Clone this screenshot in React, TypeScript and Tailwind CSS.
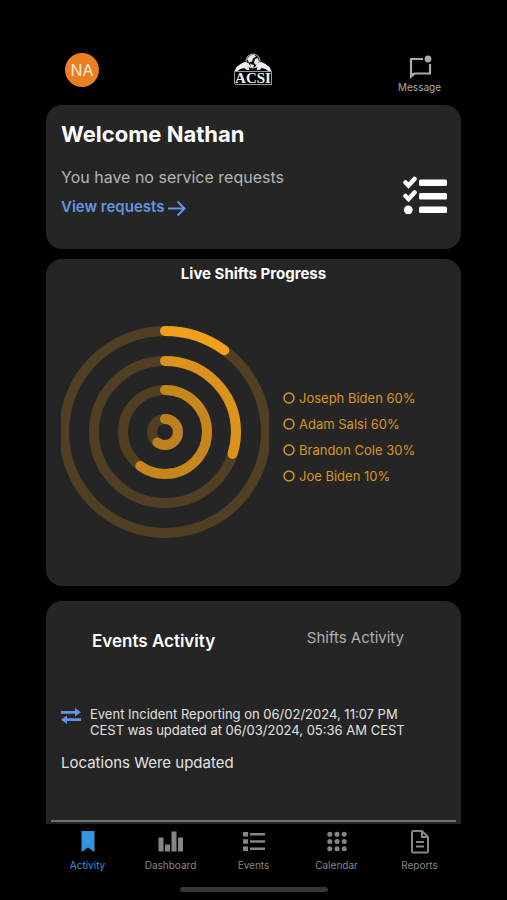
import { useState } from "react";

const shifts = [
  { name: "Joseph Biden", percent: 60, radius: 13, color: "#be811f" },
  { name: "Adam Salsi", percent: 60, radius: 42, color: "#c6861e" },
  { name: "Brandon Cole", percent: 30, radius: 71, color: "#db931d" },
  { name: "Joe Biden", percent: 10, radius: 101, color: "#f2a01b" },
];

function Logo() {
  return (
    <svg className="w-10 h-8" viewBox="0 0 40 32" role="img" aria-label="ACSI">
      {/* Globe */}
      <circle cx="20" cy="8" r="7" fill="#111" stroke="#bbb" strokeWidth="1" />
      <path d="M14 6l3-3.500 4-1 2 2-3 2-1 3-3 1zM22 6l3-1 1 4-3 3-2-2zM17 11l4 1-1 3-2-1z" fill="#e8e8e8" />
      {/* Lions */}
      <path d="M1.500 18l2-4 4-3 4-2 4 1 3 5-3-1 1 3h-3l-2-2-4 1-3 2z" fill="#eee" />
      <path d="M38.500 18l-2-4-4-3-4-2-4 1-3 5 3-1-1 3h3l2-2 4 1 3 2z" fill="#eee" />
      <path d="M1 18.500h38M2 31.500h37M1.500 19v12M38.500 19v12" stroke="#999" strokeWidth="1" />
      <text x="20" y="30" textAnchor="middle" fontFamily="Liberation Serif, serif" fontWeight="bold" fontSize="15" fill="#f3f3f3">
        ACSI
      </text>
    </svg>
  );
}

function TasksIcon() {
  return (
    <svg className="w-11 h-[38px] shrink-0" viewBox="0 0 44 38" fill="#fff" aria-hidden="true">
      <path d="M2.500 6.500L5.500 9.500 11.500 3M2.500 20L5.500 23 11.500 16.500" fill="none" stroke="#fff" strokeWidth="4.500" strokeLinecap="round" strokeLinejoin="miter" />
      <circle cx="5.300" cy="33.800" r="4.400" />
      <rect x="16" y="3.500" width="28" height="6.500" rx="1.500" />
      <rect x="16" y="17" width="28" height="6.500" rx="1.500" />
      <rect x="16" y="30.500" width="28" height="6.500" rx="1.500" />
    </svg>
  );
}

function ShiftRings() {
  return (
    <svg className="w-52 h-[214px] shrink-0" viewBox="-104 -107 208 214" fill="none" role="img" aria-label="Live shifts progress">
      {shifts.map(({ name, percent, radius, color }) => (
        <g key={name} strokeWidth="10">
          <circle r={radius} stroke="#503f23" />
          <circle
            r={radius}
            stroke={color}
            strokeLinecap="round"
            pathLength={100}
            strokeDasharray={`${percent} 100`}
            transform="rotate(-90)"
          />
        </g>
      ))}
    </svg>
  );
}

const navItems = [
  {
    label: "Activity",
    icon: <path d="M7.500 1h13v21L14 17.500 7.500 22z" />,
  },
  {
    label: "Dashboard",
    icon: <path d="M1.500 7.500h5v14h-5zM8 14.500h5v7H8zM14.500 1.500h5v20h-5zM21 7.500h5v14h-5z" />,
  },
  {
    label: "Events",
    icon: <path d="M3 2h5v4.500H3zM3 9.200h5v4.500H3zM3 16.500h5V21H3zM10 3h15v2.400H10zM10 10.300h15v2.400H10zM10 17.600h15V20H10z" />,
  },
  {
    label: "Calendar",
    icon: [4.3, 11.5, 18.7].map((cy) => [6.8, 14, 21.2].map((cx) => <circle key={`${cx}-${cy}`} cx={cx} cy={cy} r="2.500" />)),
  },
  {
    label: "Reports",
    icon: (
      <g fill="none" stroke="currentColor" strokeWidth="2" strokeLinejoin="round">
        <path d="M7.500 1H16l6 6v14q0 1.500-1.500 1.500h-13Q6 22.500 6 21V2.500Q6 1 7.500 1z" />
        <path d="M16 1v6h6M10 12h8M10 16.500h8" />
      </g>
    ),
  },
];

export default function App() {
  const [activeTab, setActiveTab] = useState("Activity");

  return (
    <div className="min-h-screen flex flex-col bg-black px-[46px] font-['Inter',sans-serif] text-white">
      {/* Header */}
      <header className="h-[105px] grid grid-cols-3 items-start pl-[19px] pr-5 pt-[53px]">
        <button type="button" className="w-[34px] h-[34px] rounded-full bg-[#e88022] text-base leading-none text-[#fbe9d8]">
          NA
        </button>
        <div className="flex justify-center">
          <Logo />
        </div>
        <button type="button" className="flex flex-col items-center justify-self-end text-[#aaa]">
          <svg className="w-6 h-7" viewBox="0 0 24 28" fill="none" aria-hidden="true">
            <path d="M15 6H3v17.500l3.500-3H22V11" stroke="currentColor" strokeWidth="2.200" />
            <path d="M2 20h5.500L2 25.500z" fill="currentColor" />
            <circle cx="20" cy="6" r="3.400" fill="currentColor" />
          </svg>
          <span className="text-[10px] leading-3">Message</span>
        </button>
      </header>

      <main className="flex-1 flex flex-col">
        {/* Welcome */}
        <section className="h-36 flex items-start justify-between rounded-2xl bg-[#252525] pl-[15px] pr-3.5 pt-3.5">
          <div>
            <h1 className="text-[22px] leading-[30px] font-bold">Welcome Nathan</h1>
            <p className="mt-4 text-base leading-6 text-[#b5b5b5]">You have no service requests</p>
            <a href="#requests" className="mt-1.5 flex items-center gap-1 text-[15px] leading-6 font-semibold text-[#6594e2]">
              View requests
              <svg className="w-[18px] h-[18px]" viewBox="0 0 18 18" fill="none" stroke="currentColor" strokeWidth="2" aria-hidden="true">
                <path d="M0 10.500h16.500M9.500 3.500l7 7-7 7" />
              </svg>
            </a>
          </div>
          <div className="pt-[57px]">
            <TasksIcon />
          </div>
        </section>

        {/* Live shifts */}
        <section className="mt-2.5 h-[327px] rounded-2xl bg-[#252525] px-[15px] pt-1">
          <h2 className="text-center text-[15px] leading-[22px] font-bold">Live Shifts Progress</h2>
          <div className="mt-10 flex items-center gap-3.5">
            <ShiftRings />
            <ul className="pt-2.5">
              {shifts.map(({ name, percent }) => (
                <li key={name} className="flex items-center gap-1 text-[13px] leading-[26px] text-[#d9951f] whitespace-nowrap">
                  <svg className="w-3 h-3" viewBox="0 0 12 12" fill="none" aria-hidden="true">
                    <circle cx="6" cy="6" r="5" stroke="currentColor" strokeWidth="1.500" />
                  </svg>
                  {name} {percent}%
                </li>
              ))}
            </ul>
          </div>
        </section>

        {/* Activity feed */}
        <section className="mt-[15px] flex-1 flex flex-col rounded-t-2xl bg-[#252525] px-[5px] pb-0.5">
          <div className="flex items-start justify-between pl-[41px] pr-[52px] pt-[25px]">
            <button type="button" className="pt-[3px] text-[17px] leading-6 font-semibold">
              Events Activity
            </button>
            <button type="button" className="text-[15px] leading-6 text-[#b0b0b0]">
              Shifts Activity
            </button>
          </div>
          <article className="flex-1 flex flex-col border-b-2 border-[#707070] px-2.5 pt-[53px] pb-10">
            <div className="flex items-start gap-[9px]">
              <svg className="mt-0.5 w-5 h-4 shrink-0 text-[#6594e2]" viewBox="0 0 20 16" aria-hidden="true">
                <path d="M0 2.900h14V0l6 4.300-6 4.200V5.800H0zM20 10.300H6V7.500L0 11.800 6 16v-2.900h14z" fill="currentColor" />
              </svg>
              <p className="max-w-80 text-[13px] leading-4 text-[#e2e2e2]">
                Event Incident Reporting on 06/02/2024, 11:07 PM CEST was updated at 06/03/2024, 05:36 AM CEST
              </p>
            </div>
            <p className="mt-[13px] text-[15px] leading-6 text-[#e2e2e2]">Locations Were updated</p>
          </article>
        </section>
      </main>

      {/* Bottom navigation */}
      <footer className="h-[76px] pt-1.5">
        <nav className="grid grid-cols-5">
          {navItems.map(({ label, icon }) => (
            <button
              key={label}
              type="button"
              onClick={() => setActiveTab(label)}
              className={`flex flex-col items-center gap-[5px] ${activeTab === label ? "text-[#3295df]" : "text-[#858585]"}`}
            >
              <svg className="w-7 h-6" viewBox="0 0 28 24" fill="currentColor" aria-hidden="true">
                {icon}
              </svg>
              <span className="text-[10px] leading-3">{label}</span>
            </button>
          ))}
        </nav>
        <div className="mx-auto mt-4 w-[148px] h-[5px] rounded-full bg-[#363636]" />
      </footer>
    </div>
  );
}
